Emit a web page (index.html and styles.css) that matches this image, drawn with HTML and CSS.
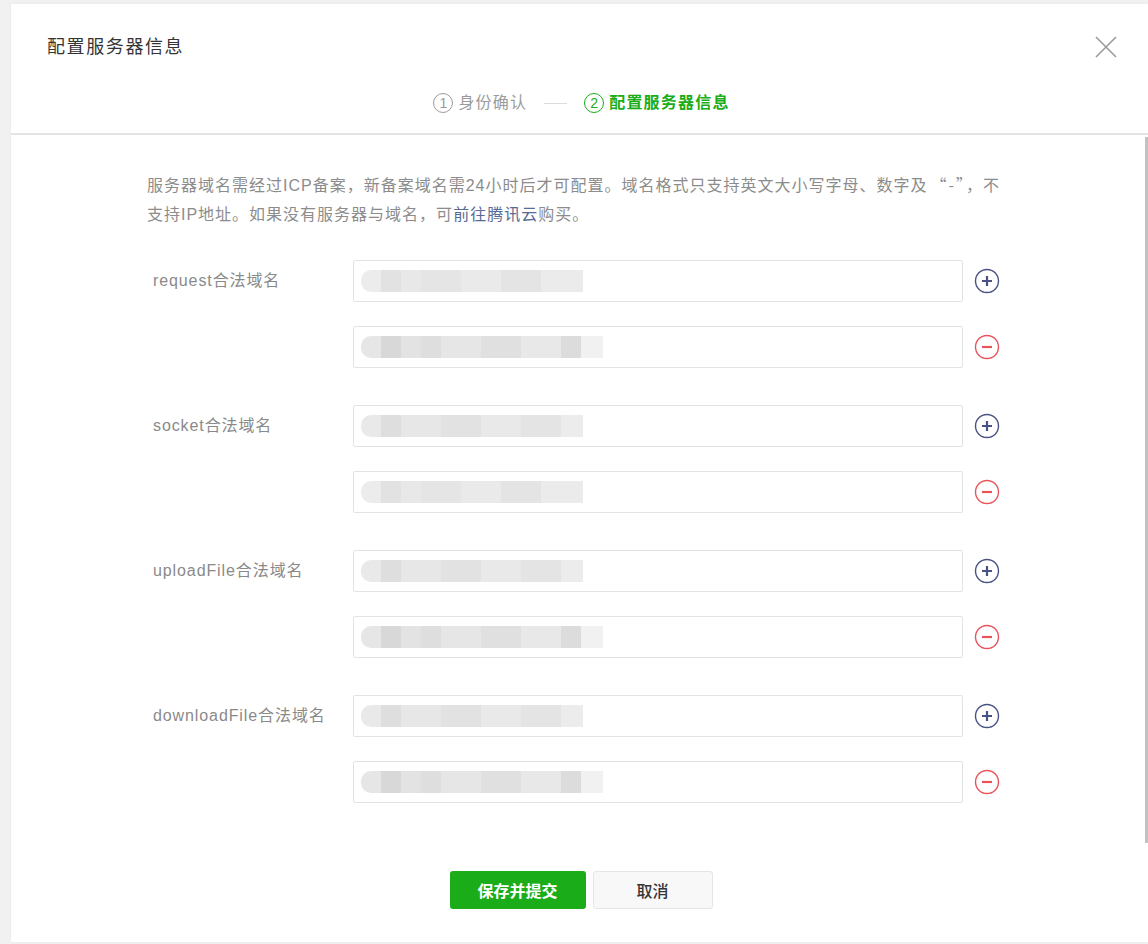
FILE: index.html
```html
<!DOCTYPE html>
<html lang="zh-CN">
<head>
<meta charset="utf-8">
<title>配置服务器信息</title>
<link rel="stylesheet" href="styles.css">
</head>
<body>
<div class="modal">
  <div class="modal-head">
    <div class="title">配置服务器信息</div>
    <button class="close" aria-label="关闭">
      <svg width="24" height="24" viewBox="0 0 24 24"><path d="M2 2 L22 22 M22 2 L2 22" stroke="#9a9a9a" stroke-width="1.6" fill="none"/></svg>
    </button>
    <div class="steps">
      <span class="step"><span class="num">1</span>身份确认</span>
      <span class="step-line"></span>
      <span class="step active"><span class="num">2</span>配置服务器信息</span>
    </div>
  </div>
  <div class="modal-body">
    <p class="desc">服务器域名需经过ICP备案，新备案域名需24小时后才可配置。域名格式只支持英文大小写字母、数字及<span class="q">“-”</span>，不<br>支持IP地址。如果没有服务器与域名，可<a class="link" href="#">前往腾讯云</a>购买。</p>

    <div class="group">
      <div class="label">request合法域名</div>
      <div class="rows">
        <div class="row">
          <div class="field"><span class="mosaic m1"></span></div>
          <span class="icon plus"><svg width="26" height="26" viewBox="0 0 26 26"><circle cx="13" cy="13" r="11.5" fill="none" stroke="#4a5284" stroke-width="1.4"/><path d="M13 8v10M8 13h10" stroke="#4a5284" stroke-width="2.2"/></svg></span>
        </div>
        <div class="row">
          <div class="field"><span class="mosaic m2"></span></div>
          <span class="icon minus"><svg width="26" height="26" viewBox="0 0 26 26"><circle cx="13" cy="13" r="11.5" fill="none" stroke="#e8545a" stroke-width="1.4"/><path d="M8 13h10" stroke="#e8545a" stroke-width="2.2"/></svg></span>
        </div>
      </div>
    </div>

    <div class="group">
      <div class="label">socket合法域名</div>
      <div class="rows">
        <div class="row">
          <div class="field"><span class="mosaic m3"></span></div>
          <span class="icon plus"><svg width="26" height="26" viewBox="0 0 26 26"><circle cx="13" cy="13" r="11.5" fill="none" stroke="#4a5284" stroke-width="1.4"/><path d="M13 8v10M8 13h10" stroke="#4a5284" stroke-width="2.2"/></svg></span>
        </div>
        <div class="row">
          <div class="field"><span class="mosaic m1"></span></div>
          <span class="icon minus"><svg width="26" height="26" viewBox="0 0 26 26"><circle cx="13" cy="13" r="11.5" fill="none" stroke="#e8545a" stroke-width="1.4"/><path d="M8 13h10" stroke="#e8545a" stroke-width="2.2"/></svg></span>
        </div>
      </div>
    </div>

    <div class="group">
      <div class="label">uploadFile合法域名</div>
      <div class="rows">
        <div class="row">
          <div class="field"><span class="mosaic m3"></span></div>
          <span class="icon plus"><svg width="26" height="26" viewBox="0 0 26 26"><circle cx="13" cy="13" r="11.5" fill="none" stroke="#4a5284" stroke-width="1.4"/><path d="M13 8v10M8 13h10" stroke="#4a5284" stroke-width="2.2"/></svg></span>
        </div>
        <div class="row">
          <div class="field"><span class="mosaic m2"></span></div>
          <span class="icon minus"><svg width="26" height="26" viewBox="0 0 26 26"><circle cx="13" cy="13" r="11.5" fill="none" stroke="#e8545a" stroke-width="1.4"/><path d="M8 13h10" stroke="#e8545a" stroke-width="2.2"/></svg></span>
        </div>
      </div>
    </div>

    <div class="group">
      <div class="label">downloadFile合法域名</div>
      <div class="rows">
        <div class="row">
          <div class="field"><span class="mosaic m3"></span></div>
          <span class="icon plus"><svg width="26" height="26" viewBox="0 0 26 26"><circle cx="13" cy="13" r="11.5" fill="none" stroke="#4a5284" stroke-width="1.4"/><path d="M13 8v10M8 13h10" stroke="#4a5284" stroke-width="2.2"/></svg></span>
        </div>
        <div class="row">
          <div class="field"><span class="mosaic m2"></span></div>
          <span class="icon minus"><svg width="26" height="26" viewBox="0 0 26 26"><circle cx="13" cy="13" r="11.5" fill="none" stroke="#e8545a" stroke-width="1.4"/><path d="M8 13h10" stroke="#e8545a" stroke-width="2.2"/></svg></span>
        </div>
      </div>
    </div>

    <div class="actions">
      <button class="btn primary">保存并提交</button>
      <button class="btn default">取消</button>
    </div>
  </div>
  <div class="scrollbar"></div>
</div>
</body>
</html>
```

FILE: styles.css
```css
* { box-sizing: border-box; }
html, body { margin: 0; padding: 0; }
body {
  background: #f1f1f1;
  font-family: "Liberation Sans", "Noto Sans CJK SC", sans-serif;
  padding: 4px 0 0 11px;
  height: 944px;
  overflow: hidden;
}
.modal {
  position: relative;
  width: 1137px;
  height: 938px;
  background: #fff;
  box-shadow: 0 0 2px rgba(0,0,0,0.06);
}
.modal-head {
  position: relative;
  height: 131px;
  padding-top: 30px;
  border-bottom: 2px solid #e4e4e4;
}
.title {
  padding-left: 36px;
  font-size: 18px;
  line-height: 26px;
  letter-spacing: 1.6px;
  color: #353535;
}
.close {
  position: absolute;
  top: 31px;
  right: 30px;
  width: 24px;
  height: 24px;
  padding: 0;
  border: 0;
  background: none;
}
.close svg { display: block; }
.steps {
  margin-top: 32px;
  display: flex;
  justify-content: center;
  align-items: center;
  font-size: 16px;
  line-height: 22px;
  padding-left: 4px;
}
.step {
  display: flex;
  align-items: center;
  color: #9b9b9b;
  letter-spacing: 1.2px;
}
.step .num {
  width: 20px;
  height: 20px;
  border: 1.3px solid currentColor;
  border-radius: 50%;
  display: inline-flex;
  align-items: center;
  justify-content: center;
  font-size: 14px;
  font-weight: 400;
  letter-spacing: 0;
  line-height: 1;
  margin-right: 5px;
}
.step.active { color: #1aad19; font-weight: 600; }
.step-line {
  width: 23px;
  height: 1px;
  background: #dcdcdc;
  margin: 0 17px;
}
.modal-body {
  padding: 35px 0 0 136px;
}
.desc {
  margin: 0;
  font-size: 16px;
  line-height: 29px;
  color: #8c8c8c;
  letter-spacing: 1px;
}
.q {
  font-family: "Noto Sans CJK SC", sans-serif;
  letter-spacing: 2px;
  padding-left: 3px;
}
.link { color: #576b95; text-decoration: none; }
.group {
  display: flex;
  margin-top: 31px;
}
.group + .group { margin-top: 37px; }
.label {
  width: 206px;
  padding-left: 6px;
  font-size: 16px;
  line-height: 42px;
  letter-spacing: 0.9px;
  color: #8a8a8a;
}
.rows {
  display: flex;
  flex-direction: column;
  gap: 24px;
}
.row {
  display: flex;
  align-items: center;
  gap: 11px;
}
.field {
  width: 610px;
  height: 42px;
  border: 1px solid #e3e3e3;
  border-radius: 2px;
  display: flex;
  align-items: center;
  padding-left: 7px;
}
.mosaic {
  display: block;
  height: 22px;
  border-radius: 10px 0 0 10px;
}
.m1 {
  width: 222px;
  background:
    linear-gradient(to right, #ececec 0 20px, #e2e2e2 20px 40px, #e8e8e8 40px 60px, #e5e5e5 60px 100px, #eaeaea 100px 140px, #e4e4e4 140px 180px, #ebebeb 180px 222px);
}
.m2 {
  width: 242px;
  background:
    linear-gradient(to right, #e6e6e6 0 20px, #d8d8d8 20px 40px, #e3e3e3 40px 60px, #dedede 60px 80px, #e6e6e6 80px 120px, #e0e0e0 120px 160px, #e8e8e8 160px 200px, #dcdcdc 200px 220px, #f1f1f1 220px 242px);
}
.m3 {
  width: 222px;
  background:
    linear-gradient(to right, #e9e9e9 0 20px, #dedede 20px 40px, #e7e7e7 40px 80px, #e2e2e2 80px 120px, #e9e9e9 120px 160px, #e4e4e4 160px 200px, #ececec 200px 222px);
}
.icon { display: block; width: 26px; height: 26px; }
.icon svg { display: block; }
.actions {
  margin: 68px 0 0 -136px;
  display: flex;
  justify-content: center;
  gap: 7px;
  padding-left: 3px;
}
.btn {
  height: 38px;
  border-radius: 3px;
  font-family: "Liberation Sans", "Noto Sans CJK SC", sans-serif;
  font-size: 16px;
  cursor: pointer;
}
.btn.primary {
  width: 136px;
  border: 0;
  background: #1aad19;
  color: #fff;
  font-weight: 600;
}
.btn.default {
  width: 120px;
  border: 1px solid #e5e5e5;
  background: #f8f8f8;
  color: #353535;
  font-weight: 500;
}
.scrollbar {
  position: absolute;
  right: 0;
  top: 133px;
  width: 3px;
  height: 706px;
  background: #c2c2c2;
}
```
